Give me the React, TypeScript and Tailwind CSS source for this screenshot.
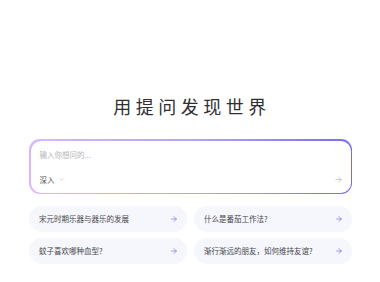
import { ArrowRight, ChevronDown } from "lucide-react";

const suggestions = [
  "宋元时期乐器与器乐的发展",
  "什么是番茄工作法?",
  "蚊子喜欢哪种血型?",
  "渐行渐远的朋友，如何维持友谊?",
];

const App = () => {
  return (
    <div
      className="w-[380px] h-[282px] bg-white overflow-hidden px-[28px] pt-[96px]"
      style={{ fontFamily: '"Noto Sans CJK SC", "Noto Sans", sans-serif' }}
    >
      {/* Title */}
      <h1 className="text-center text-[18px] leading-[20px] tracking-[4.5px] text-[#2f2f33] font-normal pl-[4px]">
        用提问发现世界
      </h1>

      {/* Search box with gradient border */}
      <div className="mt-[23px] ml-[1px] rounded-[11px] p-[1.5px] bg-gradient-to-r from-[#dcb6f8] via-[#b3a4f6] to-[#776cf1]">
        <div className="flex flex-col justify-between h-[52px] rounded-[10px] bg-white pl-[9px] pr-[8px] pt-[8px] pb-[7px]">
          <div className="text-[7.5px] leading-[12px] text-[#b4b4b8]">
            输入你想问的...
          </div>
          <div className="flex items-center justify-between">
            <div className="flex items-center gap-[3px] text-[7.5px] leading-[12px] text-[#555559]">
              深入
              <ChevronDown className="w-[7px] h-[7px] text-[#a8a8ad]" strokeWidth={1.5} />
            </div>
            <ArrowRight className="w-[9px] h-[9px] text-[#a3a3a8]" strokeWidth={1.5} />
          </div>
        </div>
      </div>

      {/* Suggestions */}
      <div className="grid grid-cols-2 gap-x-[7px] gap-y-[6px] mt-[12px] ml-[1px]">
        {suggestions.map((s) => (
          <div
            key={s}
            className="flex items-center justify-between h-[26px] rounded-full bg-[#f6f7fc] pl-[10px] pr-[9px]"
          >
            <span className="text-[7.5px] leading-[12px] text-[#45454a] truncate">{s}</span>
            <ArrowRight className="w-[8px] h-[8px] text-[#7b74ef] shrink-0" strokeWidth={2.2} />
          </div>
        ))}
      </div>
    </div>
  );
};

export default App;
